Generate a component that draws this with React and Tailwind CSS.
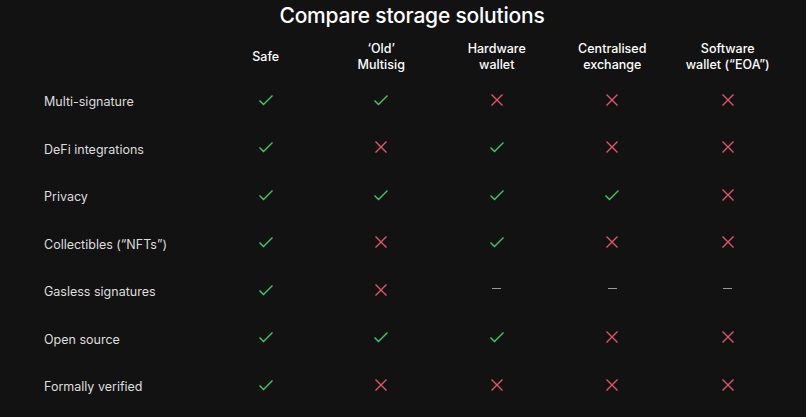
import React from "react";

const columns = [
  ["Safe"],
  ["‘Old’", "Multisig"],
  ["Hardware", "wallet"],
  ["Centralised", "exchange"],
  ["Software", "wallet (“EOA”)"],
];

// y = yes, n = no, d = not applicable
const rows = [
  ["Multi-signature", "yynnn"],
  ["DeFi integrations", "ynynn"],
  ["Privacy", "yyyyn"],
  ["Collectibles (“NFTs”)", "ynynn"],
  ["Gasless signatures", "ynddd"],
  ["Open source", "yyynn"],
  ["Formally verified", "ynnnn"],
];

function Check() {
  return (
    <svg width="16" height="12" viewBox="0 0 16 12" fill="none" className="-translate-y-[3px]">
      <path d="M1.5 6.5 L5.5 10.5 L14.5 1.5" stroke="#3ccb6c" strokeWidth="1.4" />
    </svg>
  );
}

function Cross() {
  return (
    <svg width="14" height="14" viewBox="0 0 14 14" fill="none" className="-translate-y-[3px]">
      <path d="M1.5 1.5 L12.5 12.5 M12.5 1.5 L1.5 12.5" stroke="#e0566a" strokeWidth="1.4" />
    </svg>
  );
}

function Dash() {
  return <div className="h-px w-[9px] -translate-y-[4px] bg-[#9a9a9a]" />;
}

const icons = { y: Check, n: Cross, d: Dash };

export default function App() {
  return (
    <div className="h-[417px] w-full overflow-hidden bg-[#121212] font-['Inter',sans-serif] text-white">
      <div className="flex h-[31px] items-center justify-center pl-[18px] text-[21px] font-medium tracking-[-0.01em]">
        Compare storage solutions
      </div>
      <div className="grid h-[48px] grid-cols-[208px_repeat(5,115.5px)] items-center pt-[4px] text-[12.5px] font-medium leading-[16px]">
        <div />
        {columns.map((lines) => (
          <div key={lines.join()} className="text-center">
            {lines.map((line) => (
              <div key={line}>{line}</div>
            ))}
          </div>
        ))}
      </div>
      {rows.map(([label, values]) => (
        <div key={label} className="grid h-[47.5px] grid-cols-[208px_repeat(5,115.5px)] items-center">
          <div className="pl-[44px] text-[12.5px] text-[#dedede]">{label}</div>
          {values.split("").map((v, i) => {
            const Icon = icons[v];
            return (
              <div key={i} className="flex justify-center">
                <Icon />
              </div>
            );
          })}
        </div>
      ))}
    </div>
  );
}
